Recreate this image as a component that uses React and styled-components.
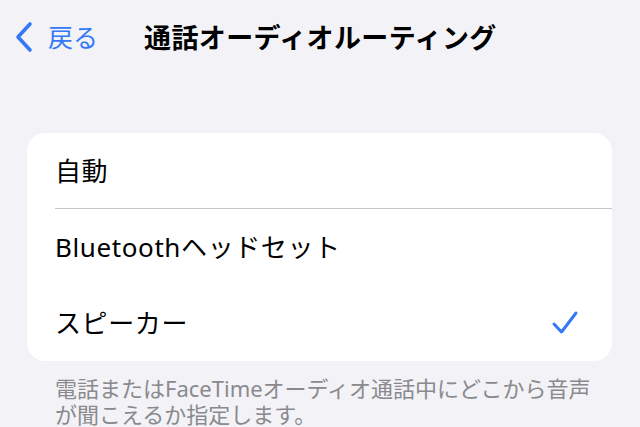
import React from "react";
import styled, { createGlobalStyle } from "styled-components";

const GlobalStyle = createGlobalStyle`
  html, body {
    margin: 0;
    padding: 0;
    background: #f2f2f7;
    font-family: "Noto Sans", "Noto Sans CJK JP", sans-serif;
  }
`;

const options = [
  { label: "自動", checked: false },
  { label: "Bluetoothヘッドセット", checked: false },
  { label: "スピーカー", checked: true },
];

const App = () => {
  return (
    <Page>
      <GlobalStyle />
      <NavBar>
        <BackButton>
          <svg width="20" height="32" viewBox="0 0 20 32">
            <path
              d="M16 3 L4 16 L16 29"
              fill="none"
              stroke="#3478f6"
              strokeWidth="3.6"
              strokeLinecap="round"
              strokeLinejoin="round"
            />
          </svg>
          <BackLabel>戻る</BackLabel>
        </BackButton>
        <Title>通話オーディオルーティング</Title>
      </NavBar>
      <Card>
        {options.map((opt, i) => (
          <Row key={opt.label} divider={i === 0}>
            <RowLabel>{opt.label}</RowLabel>
            {opt.checked && (
              <svg width="28" height="28" viewBox="0 0 28 28">
                <path
                  d="M3 15 L10.5 23 L25 4"
                  fill="none"
                  stroke="#3478f6"
                  strokeWidth="3"
                  strokeLinecap="round"
                  strokeLinejoin="round"
                />
              </svg>
            )}
          </Row>
        ))}
      </Card>
      <Footer>
        電話またはFaceTimeオーディオ通話中にどこから音声が聞こえるか指定します。
      </Footer>
    </Page>
  );
};

const Page = styled.div`
  width: 640px;
  height: 427px;
  overflow: hidden;
  background: #f2f2f7;
`;

const NavBar = styled.div`
  display: flex;
  align-items: center;
  height: 74px;
  padding-left: 14px;
`;

const BackButton = styled.div`
  display: flex;
  align-items: center;
  gap: 14px;
  color: #3478f6;
`;

const BackLabel = styled.span`
  font-size: 25px;
  line-height: 1;
`;

const Title = styled.h1`
  margin: 0 0 0 46px;
  font-size: 27px;
  font-weight: 700;
  letter-spacing: 0.4px;
  color: #000;
  line-height: 1;
`;

const Card = styled.div`
  margin: 59px 28px 0 27px;
  background: #fff;
  border-radius: 18px;
  overflow: hidden;
`;

const Row = styled.div`
  display: flex;
  align-items: center;
  justify-content: space-between;
  height: 76px;
  margin-left: 28px;
  padding-right: 33px;
  border-bottom: ${({ divider }) => (divider ? "1px solid #c6c6c8" : "none")};
  box-sizing: border-box;
`;

const RowLabel = styled.span`
  font-size: 26px;
  letter-spacing: 0.6px;
  color: #000;
  line-height: 1;
`;

const Footer = styled.p`
  margin: 14px 40px 0 55px;
  font-size: 22px;
  line-height: 26px;
  color: #8a8a8e;
`;

export default App;
